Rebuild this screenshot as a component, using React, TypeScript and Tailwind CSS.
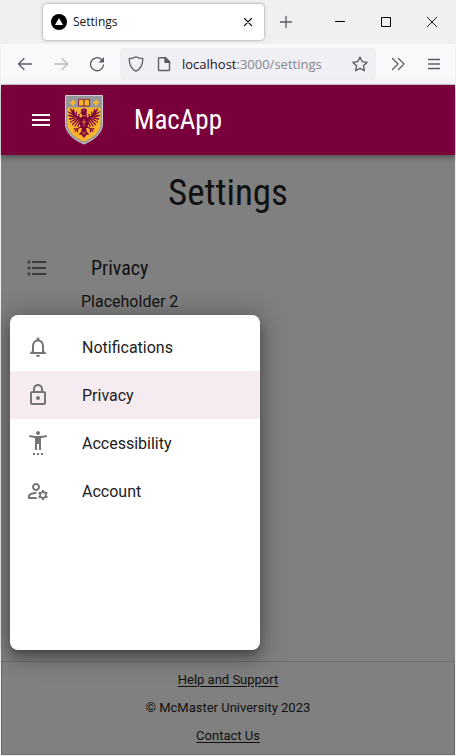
import React from "react";
import {
  MdFormatListBulleted,
  MdMenu,
  MdOutlineLock,
  MdOutlineManageAccounts,
  MdOutlineNotifications,
  MdSettingsAccessibility,
} from "react-icons/md";

const ui = "font-['Open_Sans','Noto_Sans',sans-serif]";
const condensed = "font-['Roboto_Condensed','Liberation_Sans_Narrow',Roboto,sans-serif]";

function Wing() {
  return (
    <g fill="none" stroke="#7a003c" strokeLinecap="round">
      <path d="M16.500 24C13 23.500 9.500 21 7.500 16.500" strokeWidth="2.600" />
      <g strokeWidth="1.300">
        <path d="M8 18L5.500 14M7.500 19.500L3.800 17M8.500 21.500L3.800 20.500M9.500 23L4.500 24M11 24L5.500 27M12.500 24.500L7.500 29.500M14 25L10 31M15.500 25L13 31.500" />
        <path d="M9 17.500L8.500 14.500M11 20L11.500 17M13.500 22L14 19.500" />
      </g>
    </g>
  );
}

function Crest() {
  return (
    <svg viewBox="0 0 38 50" className="h-[50px] w-[38px]" role="img" aria-label="University crest">
      <path d="M.5.5h37v28c0 10-9 16.500-18.500 20.500C9.500 45 .5 38.500.5 28.500z" fill="#95989b" stroke="#d3cdd3" />
      <path d="M2.500 12.500h33v16c0 8.500-8 14.500-16.500 18.200C10.500 43 2.500 37 2.500 28.500z" fill="#fdb52b" />
      <path d="M8 4l1.300 2.500L12 7.500 9.300 8.700 8 11.500 6.700 8.700 4 7.500l2.700-1zM31 4l1.300 2.500L35 7.500l-2.700 1.200L31 11.500l-1.300-2.800L27 7.500l2.700-1z" fill="#fdb52b" />
      <path d="M13.500 4.500q3-1 5.500.5 2.500-1.500 5.500-.5V11h-11z" fill="#fdb52b" stroke="#7a003c" strokeWidth=".8" />
      <path d="M19 5v6" stroke="#7a003c" />
      <Wing />
      <g transform="matrix(-1 0 0 1 38 0)">
        <Wing />
      </g>
      <g fill="#7a003c">
        <path d="M15.500 15.500l1.500-1.800 3-.2 2 1.200-.5 3.300.5 3-.5 3h-5l.5-4.500-2-1.500 2-1z" />
        <path d="M15 23.500h8l.5 5-1.500 4.500h-6L14.500 28.500z" />
        <path d="M17 33h4l1 4 2.500 2.500-3 .2L19 43l-2.500-3.300-3-.2L16 37z" />
      </g>
      <path
        d="M16 32l-4 2-3-.2M12 34l-2 2.500M12.500 34v3M22 32l4 2 3-.2M26 34l2 2.500M25.500 34v3"
        fill="none"
        stroke="#7a003c"
        strokeWidth="1.200"
        strokeLinecap="round"
      />
      <path
        d="M19 24v7.500M16.700 27h4.600M17 20.500q2 1.200 4 0M18 36.500v3M20 36.500v3"
        stroke="#fdb52b"
        strokeWidth=".7"
        fill="none"
      />
      <circle cx="18.500" cy="15.500" r=".6" fill="#fdb52b" />
    </svg>
  );
}

function Glyph({ d, className = "size-4", width = 1.3 }: { d: string; className?: string; width?: number }) {
  return (
    <svg
      viewBox="0 0 16 16"
      className={`${className} shrink-0`}
      fill="none"
      stroke="currentColor"
      strokeWidth={width}
      strokeLinecap="round"
      strokeLinejoin="round"
      aria-hidden="true"
    >
      <path d={d} />
    </svg>
  );
}

function TabStrip() {
  return (
    <div className={`flex h-11 items-center bg-[#f0f0f0] text-[#15141a] ${ui}`}>
      <div className="ml-[42px] flex h-9 w-[221px] items-center rounded bg-white pr-2 pl-2 shadow-[0_0_3px_rgba(0,0,0,0.45)]">
        <svg viewBox="0 0 16 16" className="size-4" aria-hidden="true">
          <circle cx="8" cy="8" r="8" fill="#000" />
          <path d="M8 4l4 7H4z" fill="#fff" />
        </svg>
        <span className="ml-1.5 flex-1 text-xs">Settings</span>
        <button aria-label="Close tab" className="grid size-4 place-items-center">
          <Glyph d="M4.500 4.500l7 7M11.500 4.500l-7 7" width={1.2} />
        </button>
      </div>
      <button aria-label="New tab" className="ml-[14px] text-[#5b5b66]">
        <Glyph d="M8 2.500v11M2.500 8h11" />
      </button>
      <div className="ml-auto flex text-black">
        <button aria-label="Minimize" className="grid h-11 w-[46px] place-items-center">
          <svg viewBox="0 0 10 10" className="size-[10px]"><path d="M0 4.500h10" stroke="currentColor" /></svg>
        </button>
        <button aria-label="Maximize" className="grid h-11 w-[46px] place-items-center">
          <svg viewBox="0 0 10 10" className="size-[10px]"><path d="M.5.5h9v9h-9z" fill="none" stroke="currentColor" /></svg>
        </button>
        <button aria-label="Close" className="grid h-11 w-[46px] place-items-center">
          <svg viewBox="0 0 10 10" className="size-[10px]"><path d="M0 0l10 10M10 0L0 10" stroke="currentColor" strokeWidth=".9" /></svg>
        </button>
      </div>
    </div>
  );
}

function Toolbar() {
  return (
    <div className={`flex h-[41px] items-center border-b border-[#cccccc] bg-[#f9f9fb] text-[#5b5b66] ${ui}`}>
      <button aria-label="Back" className="ml-4">
        <Glyph d="M14.500 8h-13M7 2.500L1.500 8 7 13.500" />
      </button>
      <button aria-label="Forward" className="ml-5 text-[#b9b9c0]">
        <Glyph d="M1.500 8h13M9 2.500L14.500 8 9 13.500" />
      </button>
      <button aria-label="Reload" className="ml-5">
        <svg viewBox="0 0 16 16" className="size-4" fill="none" stroke="currentColor" strokeWidth="1.300">
          <path d="M14.500 9A6.500 6.500 0 1 1 12.500 3.500" strokeLinecap="round" />
          <path d="M15 1v5.500H9.500z" fill="currentColor" stroke="none" />
        </svg>
      </button>
      <div className="ml-[15px] flex h-8 flex-1 items-center rounded bg-[#f0f0f4] px-2">
        <Glyph d="M8 .8c2 1.300 4.300 1.900 6.800 1.900 0 5.300-1.300 9.800-6.800 12.500C2.500 12.500 1.200 8 1.200 2.700 3.700 2.700 6 2.100 8 .8z" />
        <svg viewBox="0 0 16 16" className="ml-3 size-4" fill="none" stroke="currentColor" strokeWidth="1.400" strokeLinejoin="round">
          <path d="M3.500 1.700h6l4 4v7.800a1 1 0 0 1-1 1h-9a1 1 0 0 1-1-1V2.700a1 1 0 0 1 1-1z" />
          <path d="M9 1.500v4.700h4.700z" fill="currentColor" />
        </svg>
        <p className="ml-[10px] flex-1 pt-px text-[13px] text-[#85858c]">
          <span className="text-[#15141a]">localhost</span>:3000/settings
        </p>
        <button aria-label="Bookmark">
          <Glyph d="M8 1l2.200 4.600 5 .7-3.700 3.500.9 5L8 12.400l-4.400 2.400.9-5L.8 6.300l5-.7z" />
        </button>
      </div>
      <button aria-label="More tools" className="ml-[14px]">
        <Glyph d="M2.500 2.500L8 8l-5.500 5.500M8.500 2.500L14 8l-5.500 5.500" />
      </button>
      <button aria-label="Application menu" className="mr-[13px] ml-5">
        <Glyph d="M2.500 3.500h11M2.500 8h11M2.500 12.500h11" />
      </button>
    </div>
  );
}

const items = [
  { label: "Notifications", Icon: MdOutlineNotifications },
  { label: "Privacy", Icon: MdOutlineLock, selected: true },
  { label: "Accessibility", Icon: MdSettingsAccessibility },
  { label: "Account", Icon: MdOutlineManageAccounts },
];

export default function App() {
  return (
    <div className="flex min-h-screen flex-col border-x border-b border-[#f0f0f0] font-[Roboto,sans-serif]">
      <TabStrip />
      <Toolbar />
      <header className="z-10 flex h-[70px] items-center bg-[#7a003c] text-white shadow-[0_2px_4px_-1px_rgba(0,0,0,0.2),0_4px_5px_rgba(0,0,0,0.14),0_1px_10px_rgba(0,0,0,0.12)]">
        <button aria-label="Open menu" className="ml-7">
          <MdMenu className="size-6" />
        </button>
        <div className="ml-3">
          <Crest />
        </div>
        <span className={`ml-[31px] text-[27px] leading-8 ${condensed}`}>MacApp</span>
      </header>
      <main className="relative flex-1 bg-[#808080] text-[#111111]">
        <h1 className={`pt-4 text-center text-[37px] leading-[44px] ${condensed}`}>Settings</h1>
        <div className="mt-[35px] flex h-9 items-center pl-6">
          <button aria-label="Settings sections" className="text-[#3b3b3b]">
            <MdFormatListBulleted className="size-6" />
          </button>
          <h2 className={`ml-[42px] text-xl ${condensed}`}>Privacy</h2>
        </div>
        <p className="mt-1 pl-20 text-base leading-6">Placeholder 2</p>
        <ul
          role="menu"
          className="absolute top-40 left-[9px] h-[335px] w-[250px] rounded-lg bg-white py-2 text-[#212121] shadow-[0_5px_5px_-3px_rgba(0,0,0,0.2),0_8px_10px_1px_rgba(0,0,0,0.14),0_3px_24px_4px_rgba(0,0,0,0.3)]"
        >
          {items.map(({ label, Icon, selected }) => (
            <li key={label} role="none">
              <button
                role="menuitem"
                className={`flex h-12 w-full items-center gap-8 px-4 text-left text-base ${selected ? "bg-[#f5ebf0]" : "bg-transparent"}`}
              >
                <Icon className="size-6 text-[#757575]" />
                <span className="pt-0.5">{label}</span>
              </button>
            </li>
          ))}
        </ul>
      </main>
      <footer className="flex flex-col items-center gap-2 border border-[#6c6f6f] bg-[#808080] pt-2 pb-2 text-[13px] leading-5 text-[#111111]">
        <a href="#help" className="underline underline-offset-2">Help and Support</a>
        <p>© McMaster University 2023</p>
        <a href="#contact" className="underline underline-offset-2">Contact Us</a>
      </footer>
    </div>
  );
}
